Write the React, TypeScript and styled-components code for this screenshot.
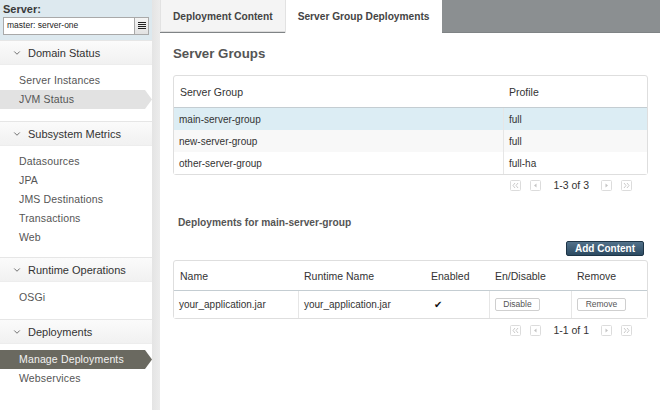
import React from 'react';
import styled, { createGlobalStyle } from 'styled-components';
import { ChevronDown } from 'lucide-react';

const GlobalStyle = createGlobalStyle`
  html, body {
    margin: 0;
    padding: 0;
    background: #fff;
  }
  body {
    font-family: "Liberation Sans", Arial, sans-serif;
    color: #333;
  }
`;

const Page = styled.div`
  display: flex;
  width: 660px;
  height: 410px;
  overflow: hidden;
`;

const Sidebar = styled.div`
  width: 152px;
  display: flex;
  flex-direction: column;
  background: #fff;
`;

const ServerBox = styled.div`
  height: 40px;
  box-sizing: border-box;
  padding: 3px 3px 0 3px;
  background: #dde9ef;
`;

const ServerLabel = styled.div`
  font-size: 11px;
  font-weight: bold;
  color: #3a3a3a;
  line-height: 13px;
`;

const ServerSelect = styled.div`
  display: flex;
  height: 18px;
  margin-top: 1px;
  border: 1px solid #a9a9a9;
  background: #fff;
  width: 146px;
  box-sizing: border-box;
`;

const SelectText = styled.div`
  flex: 1;
  font-size: 8.5px;
  padding: 2px 0 0 3px;
  color: #222;
`;

const SelectButton = styled.div`
  width: 13px;
  border-left: 1px solid #a9a9a9;
  background: linear-gradient(#f4f4f4, #e2e2e2);
  display: flex;
  align-items: center;
  justify-content: center;
`;

const Section = styled.div`
  display: flex;
  flex-direction: column;
`;

const SectionHeader = styled.div`
  height: 25px;
  box-sizing: border-box;
  display: flex;
  align-items: center;
  gap: 6px;
  padding: 1px 0 0 12px;
  border-top: 1px solid #e6e6e6;
  border-bottom: 1px solid #ededed;
  background: linear-gradient(#fbfbfb, #f1f1f1);
  font-size: 11px;
  color: #333;
`;

const ItemList = styled.div<{ $bottom: number }>`
  display: flex;
  flex-direction: column;
  padding: 6px 0 ${p => p.$bottom}px 0;
`;

const NavItem = styled.div<{ $selected?: 'light' | 'dark' }>`
  height: 19px;
  line-height: 19px;
  padding-left: 19px;
  font-size: 10.5px;
  letter-spacing: 0.15px;
  color: ${p => (p.$selected === 'dark' ? '#f2f2f2' : '#555')};
  background: ${p =>
    p.$selected === 'dark' ? '#6a6960' : p.$selected === 'light' ? '#e2e2e2' : 'transparent'};
  clip-path: polygon(0 0, calc(100% - 7px) 0, 100% 50%, calc(100% - 7px) 100%, 0 100%);
`;

const Splitter = styled.div`
  width: 8px;
  background: linear-gradient(to right, #e4e4e4, #ececec);
`;

const Main = styled.div`
  flex: 1;
  display: flex;
  flex-direction: column;
`;

const TabBar = styled.div`
  height: 33px;
  display: flex;
  background: #8b8f91;
  border-bottom: 1px solid #7f8385;
  box-sizing: border-box;
`;

const Tab = styled.div<{ $active?: boolean }>`
  display: flex;
  align-items: center;
  padding: 0 12px;
  font-size: 10.2px;
  font-weight: bold;
  color: #444;
  background: ${p => (p.$active ? '#fff' : '#f4f4f4')};
  border-left: 1px solid #e2e2e2;
  margin-bottom: ${p => (p.$active ? '-1px' : '0')};
  box-shadow: ${p => (p.$active ? 'none' : 'inset 0 -1px 0 #dcdcdc')};
`;

const Content = styled.div`
  padding: 13px 12px 0 13px;
  display: flex;
  flex-direction: column;
`;

const Heading = styled.div`
  font-size: 13.3px;
  font-weight: bold;
  color: #555;
  line-height: 16px;
`;

const TableWrap = styled.div`
  margin-top: 13px;
`;

const Table = styled.table`
  width: 100%;
  border-collapse: separate;
  border-spacing: 0;
  border: 1px solid #dedede;
  border-radius: 3px;
  font-size: 10px;
  color: #333;
`;

const HeadCell = styled.th<{ $height: number; $w?: number }>`
  height: ${p => p.$height}px;
  width: ${p => (p.$w ? `${p.$w}px` : 'auto')};
  text-align: left;
  font-weight: normal;
  font-size: 10.5px;
  padding: 0 6px;
  border-bottom: 1px solid #c4cdd2;
  box-sizing: border-box;
`;

const Row = styled.tr<{ $tone: 'selected' | 'odd' | 'even' }>`
  background: ${p => (p.$tone === 'selected' ? '#dcedf4' : p.$tone === 'odd' ? '#f8f8f8' : '#fff')};
`;

const Cell = styled.td<{ $height: number; $divider?: boolean }>`
  height: ${p => p.$height}px;
  padding: 0 5px;
  box-sizing: border-box;
  border-left: ${p => (p.$divider ? '1px solid #e6e6e6' : 'none')};
  vertical-align: middle;
`;

const Pager = styled.div<{ $top: number }>`
  display: flex;
  justify-content: flex-end;
  align-items: center;
  gap: 9px;
  height: 14px;
  margin-top: ${p => p.$top}px;
  padding-right: 16px;
  font-size: 10.5px;
  color: #333;
`;

const PagerText = styled.span`
  margin: 0 3px;
`;

const SubHeading = styled.div`
  margin-top: 24px;
  padding-left: 5px;
  font-size: 10.2px;
  font-weight: bold;
  color: #555;
  line-height: 14px;
`;

const Toolbar = styled.div`
  display: flex;
  justify-content: flex-end;
  margin-top: 11px;
  margin-bottom: 4px;
  padding-right: 4px;
`;

const PrimaryButton = styled.button`
  height: 15px;
  padding: 0 8px;
  border: 1px solid #1e3547;
  border-radius: 2px;
  background: linear-gradient(#52718a, #2c4a61);
  color: #fff;
  font-family: inherit;
  font-size: 10px;
  font-weight: bold;
  line-height: 13px;
`;

const SmallButton = styled.button<{ $w: number }>`
  width: ${p => p.$w}px;
  height: 13px;
  padding: 0;
  border: 1px solid #cfcfcf;
  border-radius: 2px;
  background: #fff;
  font-family: inherit;
  font-size: 8.5px;
  color: #555;
  line-height: 11px;
`;

const Check = styled.span`
  font-size: 10px;
  color: #111;
  padding-left: 4px;
`;

const PagerIcon = ({ kind }: { kind: 'first' | 'prev' | 'next' | 'last' }) => (
  <svg width="11" height="11" viewBox="0 0 11 11">
    <rect x="0.5" y="0.5" width="10" height="10" rx="1" fill="#fff" stroke="#dcdcdc" />
    {kind === 'first' && <path d="M5 3 L3 5.5 L5 8 M8 3 L6 5.5 L8 8" fill="none" stroke="#c4c4c4" strokeWidth="0.9" />}
    {kind === 'last' && <path d="M3 3 L5 5.5 L3 8 M6 3 L8 5.5 L6 8" fill="none" stroke="#c4c4c4" strokeWidth="0.9" />}
    {kind === 'prev' && <path d="M6.5 3.5 L4 5.5 L6.5 7.5 Z" fill="#c4c4c4" />}
    {kind === 'next' && <path d="M4.5 3.5 L7 5.5 L4.5 7.5 Z" fill="#c4c4c4" />}
  </svg>
);

const PagerBar = ({ label, top }: { label: string; top: number }) => (
  <Pager $top={top}>
    <PagerIcon kind="first" />
    <PagerIcon kind="prev" />
    <PagerText>{label}</PagerText>
    <PagerIcon kind="next" />
    <PagerIcon kind="last" />
  </Pager>
);

const sections = [
  { title: 'Domain Status', bottom: 12, items: [{ label: 'Server Instances' }, { label: 'JVM Status', sel: 'light' as const }] },
  {
    title: 'Subsystem Metrics',
    bottom: 10,
    items: [{ label: 'Datasources' }, { label: 'JPA' }, { label: 'JMS Destinations' }, { label: 'Transactions' }, { label: 'Web' }],
  },
  { title: 'Runtime Operations', bottom: 12, items: [{ label: 'OSGi' }] },
  { title: 'Deployments', bottom: 12, items: [{ label: 'Manage Deployments', sel: 'dark' as const }, { label: 'Webservices' }] },
];

const groups = [
  { name: 'main-server-group', profile: 'full' },
  { name: 'new-server-group', profile: 'full' },
  { name: 'other-server-group', profile: 'full-ha' },
];

export default function App() {
  return (
    <Page>
      <GlobalStyle />
      <Sidebar>
        <ServerBox>
          <ServerLabel>Server:</ServerLabel>
          <ServerSelect>
            <SelectText>master: server-one</SelectText>
            <SelectButton>
              <svg width="8" height="8" viewBox="0 0 8 8">
                <path d="M0 0.5h8M0 2.5h8M0 4.5h8M0 6.5h8" stroke="#222" strokeWidth="1" />
              </svg>
            </SelectButton>
          </ServerSelect>
        </ServerBox>
        {sections.map(s => (
          <Section key={s.title}>
            <SectionHeader>
              <ChevronDown size={10} strokeWidth={2} color="#555" />
              {s.title}
            </SectionHeader>
            <ItemList $bottom={s.bottom}>
              {s.items.map(i => (
                <NavItem key={i.label} $selected={'sel' in i ? i.sel : undefined}>
                  {i.label}
                </NavItem>
              ))}
            </ItemList>
          </Section>
        ))}
      </Sidebar>
      <Splitter />
      <Main>
        <TabBar>
          <Tab>Deployment Content</Tab>
          <Tab $active>Server Group Deployments</Tab>
        </TabBar>
        <Content>
          <Heading>Server Groups</Heading>
          <TableWrap>
            <Table>
              <thead>
                <tr>
                  <HeadCell $height={32} $w={329}>Server Group</HeadCell>
                  <HeadCell $height={32}>Profile</HeadCell>
                </tr>
              </thead>
              <tbody>
                {groups.map((g, i) => (
                  <Row key={g.name} $tone={i === 0 ? 'selected' : i % 2 ? 'odd' : 'even'}>
                    <Cell $height={22}>{g.name}</Cell>
                    <Cell $height={22} $divider>{g.profile}</Cell>
                  </Row>
                ))}
              </tbody>
            </Table>
          </TableWrap>
          <PagerBar label="1-3 of 3" top={3} />
          <SubHeading>Deployments for main-server-group</SubHeading>
          <Toolbar>
            <PrimaryButton>Add Content</PrimaryButton>
          </Toolbar>
          <Table>
            <thead>
              <tr>
                <HeadCell $height={30} $w={124}>Name</HeadCell>
                <HeadCell $height={30} $w={127}>Runtime Name</HeadCell>
                <HeadCell $height={30} $w={64}>Enabled</HeadCell>
                <HeadCell $height={30} $w={82}>En/Disable</HeadCell>
                <HeadCell $height={30}>Remove</HeadCell>
              </tr>
            </thead>
            <tbody>
              <Row $tone="even">
                <Cell $height={27}>your_application.jar</Cell>
                <Cell $height={27} $divider>your_application.jar</Cell>
                <Cell $height={27}>
                  <Check>✔</Check>
                </Cell>
                <Cell $height={27} $divider>
                  <SmallButton $w={45}>Disable</SmallButton>
                </Cell>
                <Cell $height={27} $divider>
                  <SmallButton $w={49}>Remove</SmallButton>
                </Cell>
              </Row>
            </tbody>
          </Table>
          <PagerBar label="1-1 of 1" top={4} />
        </Content>
      </Main>
    </Page>
  );
}
